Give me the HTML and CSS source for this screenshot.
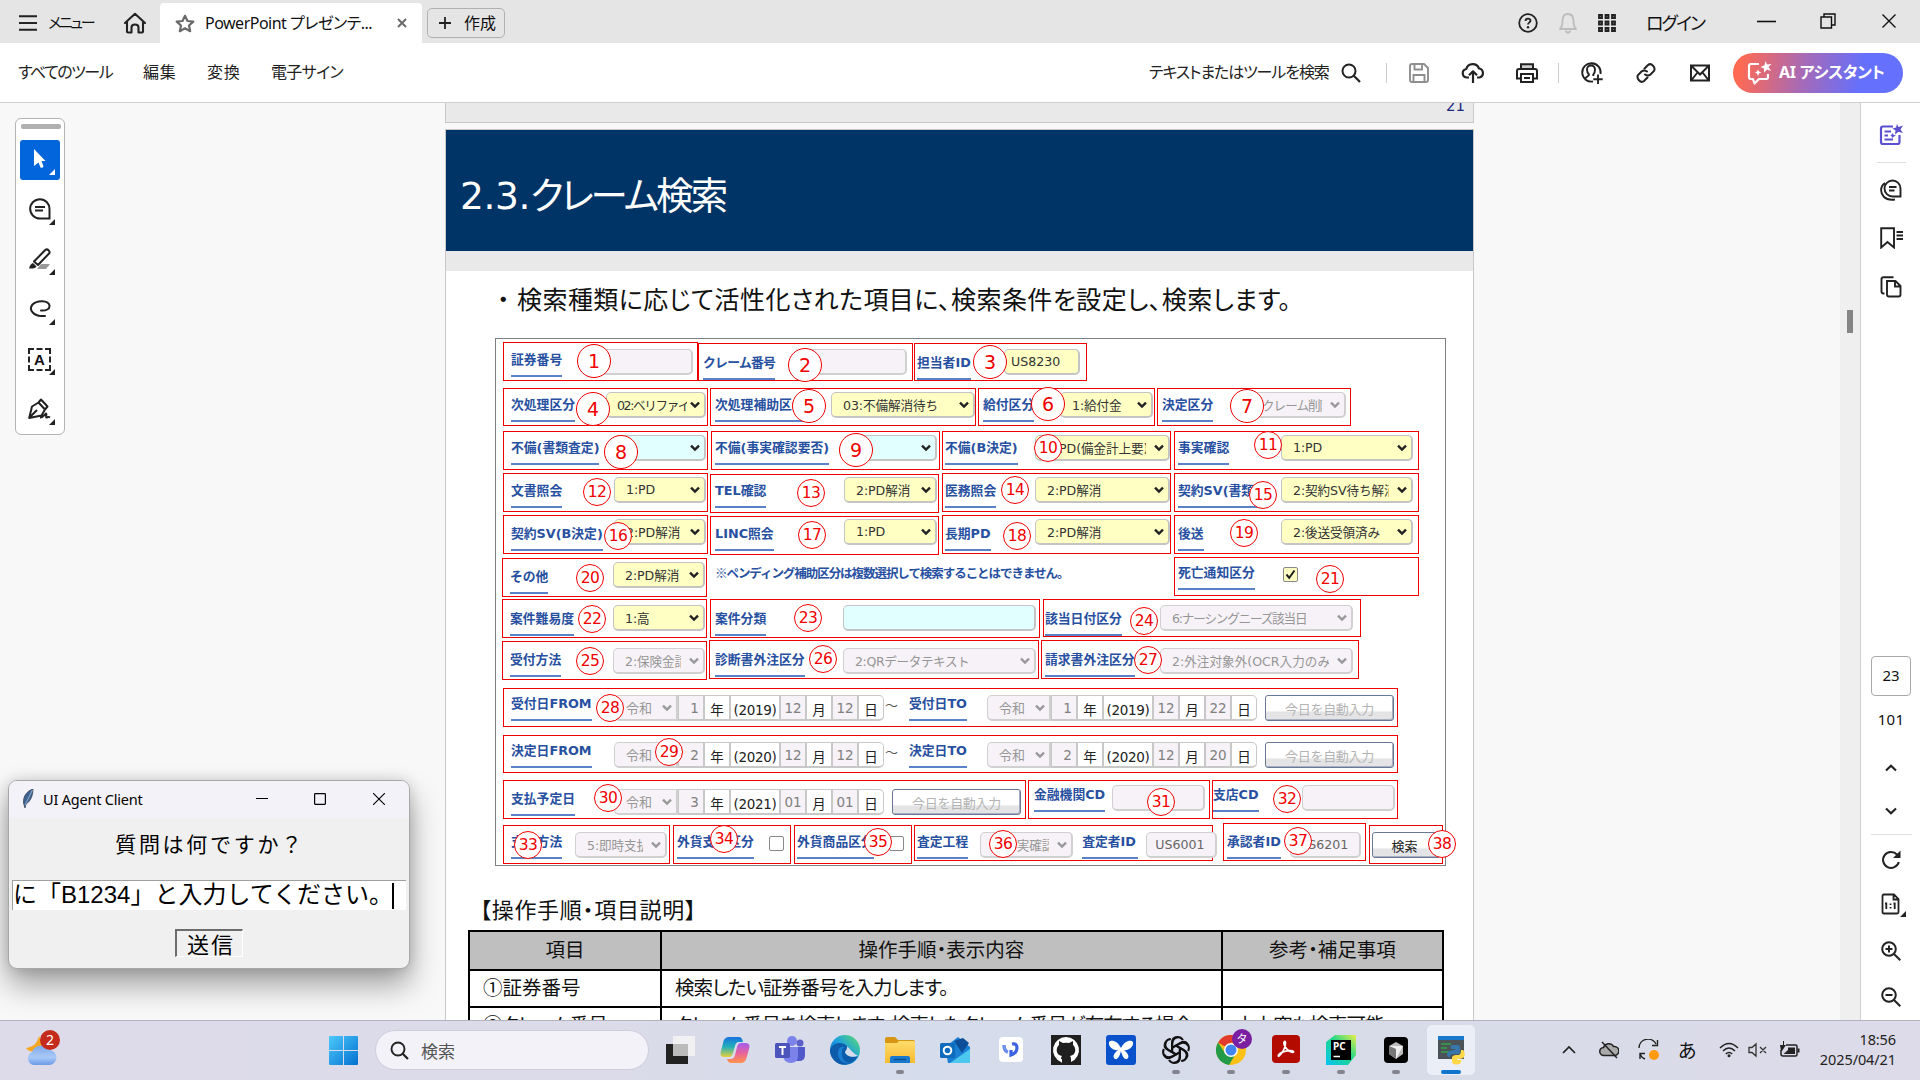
FILE: index.html
```html
<!DOCTYPE html>
<html lang="ja">
<head>
<meta charset="utf-8">
<title>PowerPoint プレゼンテーション</title>
<link rel="stylesheet" href="styles.css">
</head>
<body>
<svg class="defs" width="0" height="0" aria-hidden="true">
  <symbol id="chev" viewBox="0 0 12 8"><path d="M2 1.6 6 5.6 10 1.6" fill="none" stroke="currentColor" stroke-width="2.4"/></symbol>
  <symbol id="corner" viewBox="0 0 6 6"><path d="M6 0V6H0Z" fill="currentColor"/></symbol>
  <linearGradient id="gWin" x1="0" y1="0" x2="1" y2="1"><stop offset="0" stop-color="#4cc9fb"/><stop offset="1" stop-color="#0470d0"/></linearGradient>
  <linearGradient id="gEdge" x1="0" y1="1" x2="1" y2="0"><stop offset="0" stop-color="#0c59a4"/><stop offset=".5" stop-color="#1b9de2"/><stop offset="1" stop-color="#5fe06a"/></linearGradient>
  <linearGradient id="gCopA" x1="0" y1="0" x2="0" y2="1"><stop offset="0" stop-color="#1672e0"/><stop offset=".5" stop-color="#25b0b8"/><stop offset="1" stop-color="#e8cf3a"/></linearGradient>
  <linearGradient id="gCopB" x1="0" y1="0" x2="0" y2="1"><stop offset="0" stop-color="#a45cf0"/><stop offset=".5" stop-color="#e8629c"/><stop offset="1" stop-color="#ff9348"/></linearGradient>
  <linearGradient id="gFold" x1="0" y1="0" x2="0" y2="1"><stop offset="0" stop-color="#ffdc6b"/><stop offset="1" stop-color="#f6bb30"/></linearGradient>
  <linearGradient id="gPc" x1="0" y1="1" x2="1" y2="0"><stop offset="0" stop-color="#07c3f2"/><stop offset=".55" stop-color="#21d789"/><stop offset="1" stop-color="#e8ee4a"/></linearGradient>
  <linearGradient id="gCloud" x1="0" y1="0" x2="0" y2="1"><stop offset="0" stop-color="#7fa8ea"/><stop offset=".6" stop-color="#a9c9f7"/><stop offset="1" stop-color="#6d9be8"/></linearGradient>
</svg>

<header class="titlebar">
  <div class="menu"><svg width="18" height="16" viewBox="0 0 18 16"><path d="M0 1.2H18M0 8H18M0 14.8H18" stroke="#222" stroke-width="2"/></svg><span>メニュー</span></div>
  <svg class="home" width="24" height="22" viewBox="0 0 24 22"><path d="M2 11 12 1.8 22 11M4 10V19.5Q4 20.5 5 20.5H8.5V15.5Q8.5 12.5 12 12.5T15.500 15.5V20.500H19Q20 20.500 20 19.500V10" fill="none" stroke="#222" stroke-width="2.100" stroke-linejoin="round" stroke-linecap="round"/></svg>
  <div class="tab">
    <svg width="20" height="19" viewBox="0 0 20 19"><path d="M10 1.800 12.500 7 18.300 7.600 14 11.500 15.200 17.200 10 14.300 4.800 17.200 6 11.500 1.700 7.600 7.500 7Z" fill="none" stroke="#6a6a6a" stroke-width="2.200" stroke-linejoin="round"/></svg>
    <span>PowerPoint プレゼンテ...</span>
    <svg class="tabx" width="10" height="10" viewBox="0 0 10 10"><path d="M1 1 9 9M9 1 1 9" stroke="#6a6a6a" stroke-width="2"/></svg>
  </div>
  <div class="create"><svg width="12" height="12" viewBox="0 0 12 12"><path d="M6 0V12M0 6H12" stroke="#222" stroke-width="1.800"/></svg><span>作成</span></div>
  <div class="winctl">
    <svg width="20" height="20" viewBox="0 0 20 20"><circle cx="10" cy="10" r="8.800" fill="none" stroke="#222" stroke-width="1.800"/><path d="M7.500 8Q7.600 5.600 10 5.600T12.500 7.800C12.500 9.300 10 9.600 10 11.600" fill="none" stroke="#222" stroke-width="1.800"/><circle cx="10" cy="14.300" r="1.200" fill="#222"/></svg>
    <svg width="20" height="22" viewBox="0 0 20 22"><path d="M2 17C4 15 4.500 13.500 4.500 9 4.500 4 6.500 2 10 2S15.500 4 15.500 9C15.500 13.500 16 15 18 17ZM8 18.500Q8 20.500 10 20.500T12 18.500" fill="none" stroke="#bcbcbc" stroke-width="1.800" stroke-linejoin="round"/></svg>
    <svg width="18" height="18" viewBox="0 0 18 18"><g fill="#6b6b6b" stroke="#222" stroke-width="1.800"><path d="M1 1h3v3H1zM7.500 1h3v3h-3zM14 1h3v3h-3zM1 7.500h3v3H1zM7.500 7.500h3v3h-3zM14 7.500h3v3h-3zM1 14h3v3H1zM7.500 14h3v3h-3zM14 14h3v3h-3z"/></g></svg>
    <span class="login">ログイン</span>
    <svg class="w1" width="19" height="16" viewBox="0 0 19 16"><path d="M0 8.500H19" stroke="#111" stroke-width="1.600"/></svg>
    <svg class="w2" width="16" height="16" viewBox="0 0 16 16"><path d="M1 4H11.500V15H1ZM4 4V1H15V12H11.500" fill="none" stroke="#111" stroke-width="1.400"/></svg>
    <svg class="w3" width="14" height="14" viewBox="0 0 14 14"><path d="M.5 .5 13.500 13.500M13.500 .5 .5 13.500" stroke="#111" stroke-width="1.400"/></svg>
  </div>
</header>

<nav class="toolbar">
  <span class="t1">すべてのツール</span><span class="t2">編集</span><span class="t3">変換</span><span class="t4">電子サイン</span>
  <div class="actions">
    <span class="find">テキストまたはツールを検索</span>
    <svg width="20" height="20" viewBox="0 0 20 20"><circle cx="8" cy="8" r="6.500" fill="none" stroke="#222" stroke-width="2"/><path d="M12.800 12.800 19 19" stroke="#222" stroke-width="2.200"/></svg>
    <i class="vsep s1"></i>
    <svg class="a1" width="20" height="20" viewBox="0 0 20 20"><path d="M1 3Q1 1 3 1H15L19 5V17Q19 19 17 19H3Q1 19 1 17ZM5.500 1V6.500H13V1M4.500 19V12H15.500V19" fill="none" stroke="#8e8e8e" stroke-width="1.900"/></svg>
    <svg class="a2" width="24" height="22" viewBox="0 0 24 22"><path d="M8 15.500H5.500A4.300 4.300 0 0 1 5.300 7 6.700 6.700 0 0 1 18 6.500 4.600 4.600 0 0 1 18.500 15.500H16M12 21V9.500M8 13.300 12 9.300 16 13.300" fill="none" stroke="#222" stroke-width="2.200" stroke-linejoin="round"/></svg>
    <svg class="a3" width="22" height="20" viewBox="0 0 22 20"><path d="M5 6V1.200H17V6" fill="#cfcfcf" stroke="#222" stroke-width="2"/><path d="M5 15.500H1V8Q1 6 3 6H19Q21 6 21 8V15.500H17M5 11H17V19H5ZM8 15H14" fill="none" stroke="#222" stroke-width="2"/></svg>
    <i class="vsep s2"></i>
    <svg class="a4" width="22" height="22" viewBox="0 0 22 22"><path d="M12 19.500A9.200 9.200 0 1 1 19.500 12M4.500 16.500C5 14.500 8 14.500 8 12.500 6.500 11 6 9 6 7.500 6 5 7.500 3.500 10 3.500S14 5 14 7.500C14 9.500 13.500 11.500 12.300 12.500V14M17 12.500V22M12.300 17.200H21.700" fill="none" stroke="#222" stroke-width="1.900"/></svg>
    <svg class="a5" width="20" height="20" viewBox="0 0 20 20"><g fill="none" stroke="#222" stroke-width="2" stroke-linecap="round"><path d="M8.500 5.500 12 2Q14.500 0 17 2.700T18 8L14.500 11.500Q12 13.500 9 11.500"/><path d="M11.500 14.500 8 18Q5.500 20 3 17.300T2 12L5.500 8.500Q8 6.500 11 8.500"/></g></svg>
    <svg class="a6" width="20" height="18" viewBox="0 0 20 18"><path d="M1 1.500H19V16.500H1ZM1.500 2 10 10.500 18.500 2M1.500 16 7.500 8.500M18.500 16 12.500 8.500" fill="none" stroke="#222" stroke-width="2"/></svg>
    <div class="ai"><svg width="25" height="24" viewBox="0 0 25 24"><path d="M12 3H4Q2 3 2 5V16Q2 18 4 18H6L7.500 22.500 12 18H19Q21 18 21 16V13" fill="none" stroke="#fff" stroke-width="2.200" stroke-linejoin="round"/><path d="M18.500 0 20 3.500 24.500 3 21.500 6 24 10 20 8.500 17 11.500 17 7.500 13.500 6 17.500 4.200ZM11 8.500 12 10.500 14.300 11.500 12 12.600 11 15 10 12.600 8 11.500 10 10.500Z" fill="#fff"/></svg><span>AI アシスタント</span></div>
  </div>
</nav>

<main class="work">
  <section class="viewer">
    <div class="prevpage"><span>21</span></div>
    <article class="page">
      <h1><span>2.3.</span>クレーム検索</h1>
      <div class="band"></div>
      <p class="lead"><span class="dot">・</span>検索種類に応じて活性化された項目に、検索条件を設定し、検索します。</p>

      <div class="form">
        <div class="row r1">
          <div class="box f1"><label>証券番号</label><b class="in off"></b></div>
          <div class="box f2"><label class="sp">クレーム番号</label><b class="in off"></b></div>
          <div class="box f3"><label>担当者ID</label><b class="in yel">US8230</b></div>
        </div>
        <div class="row r2">
          <div class="box f4"><label>次処理区分</label><b class="in yel sel"><span>02:ベリファイ</span><svg><use href="#chev"/></svg></b></div>
          <div class="box f5"><label>次処理補助区分</label><b class="in yel sel"><span>03:不備解消待ち</span><svg><use href="#chev"/></svg></b></div>
          <div class="box f6"><label>給付区分</label><b class="in yel sel"><span>1:給付金</span><svg><use href="#chev"/></svg></b></div>
          <div class="box f7"><label>決定区分</label><b class="in off sel"><span>クレーム削除</span><svg><use href="#chev"/></svg></b></div>
        </div>
        <div class="row r3">
          <div class="box c1"><label>不備(書類査定)</label><b class="in cya sel"><span></span><svg><use href="#chev"/></svg></b></div>
          <div class="box c2"><label>不備(事実確認要否)</label><b class="in cya sel"><span></span><svg><use href="#chev"/></svg></b></div>
          <div class="box c3"><label>不備(B決定)</label><b class="in yel sel"><span>1:PD(備金計上要)</span><svg><use href="#chev"/></svg></b></div>
          <div class="box c4"><label>事実確認</label><b class="in yel sel"><span>1:PD</span><svg><use href="#chev"/></svg></b></div>
        </div>
        <div class="row r4">
          <div class="box c1"><label>文書照会</label><b class="in yel sel"><span>1:PD</span><svg><use href="#chev"/></svg></b></div>
          <div class="box c2 low"><label>TEL確認</label><b class="in yel sel"><span>2:PD解消</span><svg><use href="#chev"/></svg></b></div>
          <div class="box c3"><label>医務照会</label><b class="in yel sel"><span>2:PD解消</span><svg><use href="#chev"/></svg></b></div>
          <div class="box c4"><label>契約SV(書類)</label><b class="in yel sel"><span>2:契約SV待ち解消</span><svg><use href="#chev"/></svg></b></div>
        </div>
        <div class="row r5">
          <div class="box c1"><label>契約SV(B決定)</label><b class="in yel sel"><span>2:PD解消</span><svg><use href="#chev"/></svg></b></div>
          <div class="box c2 low"><label>LINC照会</label><b class="in yel sel"><span>1:PD</span><svg><use href="#chev"/></svg></b></div>
          <div class="box c3"><label>長期PD</label><b class="in yel sel"><span>2:PD解消</span><svg><use href="#chev"/></svg></b></div>
          <div class="box c4"><label>後送</label><b class="in yel sel"><span>2:後送受領済み</span><svg><use href="#chev"/></svg></b></div>
        </div>
        <div class="row r6">
          <div class="box c1 out"><label>その他</label><b class="in yel sel"><span>2:PD解消</span><svg><use href="#chev"/></svg></b></div>
          <p class="note">※ペンディング補助区分は複数選択して検索することはできません。</p>
          <div class="box f21"><label>死亡通知区分</label><b class="chk on"><svg width="11" height="11" viewBox="0 0 11 11"><path d="M1.500 5.500 4.200 8.800 9.500 1.500" fill="none" stroke="#222" stroke-width="2"/></svg></b></div>
        </div>
        <div class="row r7">
          <div class="box c1 out"><label>案件難易度</label><b class="in yel sel"><span>1:高</span><svg><use href="#chev"/></svg></b></div>
          <div class="box f23"><label>案件分類</label><b class="in cya"></b></div>
          <div class="box f24"><label>該当日付区分</label><b class="in off sel"><span>6:ナーシングニーズ該当日</span><svg><use href="#chev"/></svg></b></div>
        </div>
        <div class="row r8">
          <div class="box c1 out low"><label>受付方法</label><b class="in off sel"><span>2:保険金請求</span><svg><use href="#chev"/></svg></b></div>
          <div class="box f26"><label>診断書外注区分</label><b class="in off sel"><span>2:QRデータテキスト</span><svg><use href="#chev"/></svg></b></div>
          <div class="box f27"><label>請求書外注区分</label><b class="in off sel"><span>2:外注対象外(OCR入力のみ)</span><svg><use href="#chev"/></svg></b></div>
        </div>
        <div class="row r9">
          <div class="box wide">
            <label>受付日FROM</label>
            <div class="date"><b class="in off sel era"><span>令和</span><svg><use href="#chev"/></svg></b><i class="g one">1</i><i>年</i><i class="y">(2019)</i><i class="g">12</i><i>月</i><i class="g">12</i><i class="end">日</i></div>
            <span class="til">～</span>
            <label>受付日TO</label>
            <div class="date"><b class="in off sel era"><span>令和</span><svg><use href="#chev"/></svg></b><i class="g one">1</i><i>年</i><i class="y">(2019)</i><i class="g">12</i><i>月</i><i class="g">22</i><i class="end">日</i></div>
            <b class="btn auto">今日を自動入力</b>
          </div>
        </div>
        <div class="row r10">
          <div class="box wide">
            <label>決定日FROM</label>
            <div class="date"><b class="in off sel era"><span>令和</span><svg><use href="#chev"/></svg></b><i class="g one">2</i><i>年</i><i class="y">(2020)</i><i class="g">12</i><i>月</i><i class="g">12</i><i class="end">日</i></div>
            <span class="til">～</span>
            <label>決定日TO</label>
            <div class="date"><b class="in off sel era"><span>令和</span><svg><use href="#chev"/></svg></b><i class="g one">2</i><i>年</i><i class="y">(2020)</i><i class="g">12</i><i>月</i><i class="g">20</i><i class="end">日</i></div>
            <b class="btn auto">今日を自動入力</b>
          </div>
        </div>
        <div class="row r11">
          <div class="box f30">
            <label>支払予定日</label>
            <div class="date"><b class="in off sel era"><span>令和</span><svg><use href="#chev"/></svg></b><i class="g one">3</i><i>年</i><i class="y">(2021)</i><i class="g">01</i><i>月</i><i class="g">01</i><i class="end">日</i></div>
            <b class="btn auto">今日を自動入力</b>
          </div>
          <div class="box f31"><label>金融機関CD</label><b class="in off"></b></div>
          <div class="box f32"><label>支店CD</label><b class="in off"></b></div>
        </div>
        <div class="row r12">
          <div class="box f33"><label>支払方法</label><b class="in off sel"><span>5:即時支払</span><svg><use href="#chev"/></svg></b></div>
          <div class="box f34"><label>外貨支払区分</label><b class="chk"></b></div>
          <div class="box f35"><label>外貨商品区分</label><b class="chk"></b></div>
          <div class="box f36"><label>査定工程</label><b class="in off sel"><span>2:事実確認</span><svg><use href="#chev"/></svg></b><label class="who">査定者ID</label><b class="in off code">US6001</b></div>
          <div class="box f37"><label>承認者ID</label><b class="in off code">US6201</b></div>
          <div class="box f38"><b class="btn go">検索</b></div>
        </div>

        <em class="n big n1">1</em><em class="n big n2">2</em><em class="n big n3">3</em><em class="n big n4">4</em><em class="n big n5">5</em><em class="n big n6">6</em><em class="n n7 big">7</em><em class="n big n8">8</em><em class="n big n9">9</em>
        <em class="n n10">10</em><em class="n n11">11</em><em class="n n12">12</em><em class="n n13">13</em><em class="n n14">14</em><em class="n n15">15</em><em class="n n16">16</em><em class="n n17">17</em><em class="n n18">18</em><em class="n n19">19</em>
        <em class="n n20">20</em><em class="n n21">21</em><em class="n n22">22</em><em class="n n23">23</em><em class="n n24">24</em><em class="n n25">25</em><em class="n n26">26</em><em class="n n27">27</em><em class="n n28">28</em><em class="n n29">29</em>
        <em class="n n30">30</em><em class="n n31">31</em><em class="n n32">32</em><em class="n n33">33</em><em class="n n34">34</em><em class="n n35">35</em><em class="n n36">36</em><em class="n n37">37</em><em class="n n38">38</em>
      </div>

      <h2>【操作手順・項目説明】</h2>
      <table>
        <tr><th class="k1">項目</th><th class="k2">操作手順・表示内容</th><th class="k3">参考・補足事項</th></tr>
        <tr><td>①証券番号</td><td class="long">検索したい証券番号を入力します。</td><td></td></tr>
        <tr><td class="long">②クレーム番号</td><td class="long">クレーム番号を検索します。検索したクレーム番号が存在する場合</td><td class="long">上上空も検索可能</td></tr>
      </table>
    </article>

    <aside class="palette">
      <i class="grip"></i>
      <div class="tool on"><svg width="14" height="20" viewBox="0 0 14 20"><path d="M1 0 12.500 12H8.500L10.500 17.500Q9.500 19.500 7.500 18.500L5.500 13.500 1 17Z" fill="#fff"/></svg><svg class="cr"><use href="#corner"/></svg></div>
      <div class="tool"><svg width="22" height="22" viewBox="0 0 22 22"><path d="M11 1.200A9.800 9.600 0 0 0 11 20.500H20.500V11A9.500 9.800 0 0 0 11 1.200ZM6 9H16M6 12.500H14" fill="none" stroke="#222" stroke-width="2"/></svg><svg class="cr"><use href="#corner"/></svg></div>
      <div class="tool"><svg width="22" height="22" viewBox="0 0 22 22"><path d="M12 16H21L17 21H8Z" fill="#999"/><path d="M5 13.500 16.500 1.800Q18 .8 19.500 2.200T20.500 5L9 17Z" fill="#fff" stroke="#222" stroke-width="2" stroke-linejoin="round"/><path d="M4 15 7.500 18.500Q6 21 0 20.500 1 16 4 15Z" fill="#222"/></svg><svg class="cr"><use href="#corner"/></svg></div>
      <div class="tool"><svg width="22" height="18" viewBox="0 0 22 18"><path d="M12 10.500C17 11 21 9 20.500 5.500 19.500 0 8 0 3.500 4.500-1 10 5 17 16 16" fill="none" stroke="#222" stroke-width="2" stroke-linecap="round"/></svg><svg class="cr"><use href="#corner"/></svg></div>
      <div class="tool"><span class="abox">A</span><svg class="cr"><use href="#corner"/></svg></div>
      <div class="tool"><svg width="23" height="22" viewBox="0 0 23 22"><path d="M1.200 20 4 8.500 10.500 4.500 17 11.500 13.500 17.500 1.200 20ZM1.500 19.500 9 12M10.500 4.500 13 1.500 19.500 8.500 17 11.500M12 19.500C15 20 16 17 18 15.500 19 15.500 17.500 19.500 18.500 19.500S20.500 18.500 22 19.500" fill="none" stroke="#222" stroke-width="2" stroke-linejoin="round"/></svg><svg class="cr"><use href="#corner"/></svg></div>
    </aside>
  </section>
  <div class="track"><i></i></div>
  <aside class="side">
    <svg class="q1" width="24" height="24" viewBox="0 0 24 24"><path d="M14 3.500H4Q2 3.500 2 5.500V19Q2 21 4 21H18.500Q20.500 21 20.500 19V12M5.500 8.500H12M5.500 12.500H9M5.500 16.500H14" fill="none" stroke="#5b50d0" stroke-width="2.200"/><path d="M18 1 19.500 4 24 2.500 21.500 6.500 24 10 19.500 8.800 16 11.500 16.500 7.500 13.500 5.500 17 4.500ZM13 10 15 12 17 12.500 15 13.500 13 15 12.500 13 11 12.500 12.500 12Z" fill="#5b50d0"/></svg>
    <i class="hsep"></i>
    <svg class="q2" width="22" height="22" viewBox="0 0 22 22"><path d="M12.500 1.500A7.800 7.800 0 0 0 12.500 17.500H20.500V9.500A8 8 0 0 0 12.500 1.500ZM9 8H16.500M9 11.500H14.500M5 4C0 7.500 0 14 4 18 7 21 11 21 15 20.500" fill="none" stroke="#222" stroke-width="1.900"/></svg>
    <svg class="q3" width="23" height="22" viewBox="0 0 23 22"><path d="M1.200 1.200H14V20.500L7.500 15 1.200 20.500ZM16.500 5H23M16.500 8.500H23M16.500 12H23" fill="none" stroke="#222" stroke-width="1.900"/></svg>
    <svg class="q4" width="22" height="22" viewBox="0 0 22 22"><path d="M7 5H15.500L20.500 10V18.500Q20.500 20.500 18.500 20.500H9Q7 20.500 7 18.500ZM15 5.500V10.500H20M4.500 17.500H3.500Q1.500 17.500 1.500 15.500V3Q1.500 1.200 3.500 1.200H13.500" fill="none" stroke="#222" stroke-width="1.900"/></svg>
    <div class="pageno">23</div>
    <div class="total">101</div>
    <svg class="q5" width="12" height="8" viewBox="0 0 12 8"><path d="M1 6.500 6 1.800 11 6.500" fill="none" stroke="#222" stroke-width="2.200"/></svg>
    <svg class="q6" width="12" height="8" viewBox="0 0 12 8"><path d="M1 1.500 6 6.200 11 1.500" fill="none" stroke="#222" stroke-width="2.200"/></svg>
    <i class="hsep lg"></i>
    <svg class="q7" width="20" height="20" viewBox="0 0 20 20"><path d="M16 4.500A8 8 0 1 0 17.800 12" fill="none" stroke="#222" stroke-width="2"/><path d="M19.500 .5V8H12Z" fill="#222"/></svg>
    <svg class="q8" width="25" height="24" viewBox="0 0 25 24"><path d="M1.500 3Q1.500 1.500 3 1.500H13L17.500 6V19Q17.500 20.500 16 20.500H3Q1.500 20.500 1.500 19ZM12.500 1.500V6.500H17.500M5.300 9.500V16M13.700 9.500V16M4 10.500H5.500M12.500 10.500H14M9.500 10.500V12M9.500 14V15.500" fill="none" stroke="#222" stroke-width="1.800"/><path d="M25 18V24H19Z" fill="#222"/></svg>
    <svg class="q9" width="20" height="20" viewBox="0 0 20 20"><path d="M12.500 12.500 19.300 19.300M4.500 8H11.500M8 4.500V11.500" stroke="#222" stroke-width="2"/><circle cx="8" cy="8" r="6.800" fill="none" stroke="#222" stroke-width="2"/></svg>
    <svg class="q10" width="20" height="20" viewBox="0 0 20 20"><path d="M12.500 12.500 19.300 19.300M4.500 8H11.500" stroke="#222" stroke-width="2"/><circle cx="8" cy="8" r="6.800" fill="none" stroke="#222" stroke-width="2"/></svg>
  </aside>
</main>

<section class="tk">
  <header>
    <svg width="12" height="20" viewBox="0 0 12 20"><path d="M11 0C5 2 1 7 1.500 14L3 19 4 15C9 12 11 6 11 0Z" fill="#3d628f" stroke="#2b3a52" stroke-width=".7"/><path d="M10.500 1 3 16" stroke="#a9c4de" stroke-width=".8"/></svg>
    <span>UI Agent Client</span>
    <svg class="m" width="12" height="12" viewBox="0 0 12 12"><path d="M0 5.500H12" stroke="#000"/></svg>
    <svg class="m2" width="12" height="12" viewBox="0 0 12 12"><rect x=".6" y=".6" width="10.800" height="10.800" rx=".8" fill="none" stroke="#000" stroke-width="1.200"/></svg>
    <svg class="m3" width="12" height="12" viewBox="0 0 12 12"><path d="M0 0 12 12M12 0 0 12" stroke="#000" stroke-width="1.100"/></svg>
  </header>
  <p>質問は何ですか？</p>
  <div class="entry"><span>に「B1234」と入力してください。</span><i></i></div>
  <div class="send">送信</div>
</section>

<footer class="taskbar">
  <div class="weather"><svg width="34" height="36" viewBox="0 0 34 36"><path d="M13 6C11 14 7 17 0 18 4 24 14 22 17 14Z" fill="#f5a623"/><path d="M7 35A7 7 0 0 1 6 22 9.500 9.500 0 0 1 23 20 7.500 7.500 0 0 1 23 35Z" fill="url(#gCloud)"/></svg><span>2</span></div>
  <svg class="start" width="29" height="29" viewBox="0 0 29 29"><g fill="url(#gWin)"><path d="M0 1Q0 0 1 0H14V14H0ZM15 0H28Q29 0 29 1V14H15ZM0 15H14V29H1Q0 29 0 28ZM15 15H29V28Q29 29 28 29H15Z"/></g></svg>
  <div class="search"><svg width="19" height="19" viewBox="0 0 19 19"><circle cx="8" cy="8" r="6.500" fill="none" stroke="#222" stroke-width="1.900"/><path d="M12.700 12.700 18 18" stroke="#222" stroke-width="2.200"/></svg><span>検索</span></div>
  <div class="apps">
    <div><svg viewBox="0 0 30 30"><path d="M1 9H23V29H1Z" fill="#222"/><path d="M8 1H30V21H8Z" fill="#f4f4f4" opacity=".85"/><path d="M8 9H23V21H8Z" fill="#bbb"/></svg></div>
    <div><svg viewBox="0 0 30 30"><path d="M21 8H25Q31 8 29 14L26.500 23Q25 28 21 28H11Q8 28 7 24H11Q14 24 15 20L17 12Q18 8 21 8Z" fill="url(#gCopB)"/><path d="M9 22H5Q-1 22 1 16L3.500 6Q5 2 9 2H19Q22 2 23 7H19Q16 7 15 11L13 18Q12 22 9 22Z" fill="url(#gCopA)"/></svg></div>
    <div><svg viewBox="0 0 30 30"><circle cx="25" cy="8" r="3.500" fill="#5b5fc7"/><circle cx="17" cy="6" r="5" fill="#7b83eb"/><path d="M20 12H30V20Q30 26 24 26H20Z" fill="#5059c9"/><path d="M8 12H23V21Q23 28 16 28T8 21Z" fill="#7b83eb"/><rect y="8" width="15" height="15" rx="1.500" fill="#4b53bc"/><path d="M4 12H11M7.500 12V20" stroke="#fff" stroke-width="2"/></svg></div>
    <div><svg viewBox="0 0 30 30"><circle cx="15" cy="15" r="15" fill="url(#gEdge)"/><path d="M0 15C3 7 12 6 17 11 18 13 16 15 15 17 16 21 22 23 28 21 24 29 12 33 5 26 1 22 0 18 0 15Z" fill="#0d5cab"/><path d="M15 17C16 15 18 13 17 11 20 14 24 19 28 21 22 23 16 21 15 17Z" fill="#d7dbea"/><path d="M8 17C7 24 13 30 21 28 14 28 11 23 12 17Q12 13 15 12 9 11 8 17Z" fill="#1a7fd0"/></svg></div>
    <div class="run"><svg viewBox="0 0 30 30"><path d="M0 4Q0 2 2 2H10L13 5H28Q30 5 30 7V12H0Z" fill="#d89614"/><path d="M0 8H12L14 6H28Q30 6 30 8V28H0Z" fill="url(#gFold)"/><path d="M5 28V23Q5 21 7 21H23Q25 21 25 23V28Z" fill="#1979cc"/><path d="M9 24.500H21" stroke="#0b508f" stroke-width="1.500"/></svg></div>
    <div><svg viewBox="0 0 30 30"><path d="M5 12 18 2 30 12V28H8Z" fill="#1b7fd4"/><path d="M14 6 23 3 29 8 22 18Z" fill="#0c4f98"/><path d="M10 28 30 14V28Z" fill="#4cc8f0"/><rect y="8" width="15" height="15" rx="1.500" fill="#0f6cbd"/><circle cx="7.500" cy="15.500" r="3.800" fill="none" stroke="#fff" stroke-width="2"/></svg></div>
    <div><svg viewBox="0 0 30 30"><rect x="3" y="2" width="24" height="25" rx="4" fill="#fff"/><path d="M16 9Q21 8 21 13T15 20V15" fill="none" stroke="#3b62e0" stroke-width="3.200"/><path d="M8 10Q8 16 12 17" fill="none" stroke="#6d8ff0" stroke-width="3.500"/></svg></div>
    <div><svg viewBox="0 0 30 30"><rect width="30" height="30" fill="#1f1f1f"/><path d="M11 28V24C7 24.500 6 22.500 5 21M15 2A13 13 0 0 0 10 27V24Q10 22 11 21C4 20 5 12 8 10V6L12 8Q15 7.300 18 8L22 6V10C25 12 26 20 19 21Q20 22 20 24V27A13 13 0 0 0 15 2Z" fill="#fff"/></svg></div>
    <div><svg viewBox="0 0 30 30"><rect width="30" height="30" rx="3" fill="#0a52cc"/><path d="M15 13C12 6 5 4 3 7 2 12 8 16 12 15 8 18 6 22 9 24 12 25 14 20 15 16 16 20 18 25 21 24 24 22 22 18 18 15 22 16 28 12 27 7 25 4 18 6 15 13Z" fill="#fff"/></svg></div>
    <div class="run"><svg viewBox="0 0 30 30"><g fill="none" stroke="#111" stroke-width="2"><path id="kn" d="M11 18V8Q11 2 16.500 2 20 2 22 5M11 13 19 8.500Q24 6 27 10.500"/><use href="#kn" transform="rotate(60 15 15)"/><use href="#kn" transform="rotate(120 15 15)"/><use href="#kn" transform="rotate(180 15 15)"/><use href="#kn" transform="rotate(240 15 15)"/><use href="#kn" transform="rotate(300 15 15)"/></g></svg></div>
    <div class="run"><svg viewBox="0 0 30 30"><circle cx="15" cy="15" r="15" fill="#fbc116"/><path d="M15 15 2 7.500A15 15 0 0 1 28 7.500H15Z" fill="#e33b2e"/><path d="M2 7.500A15 15 0 0 0 13 30L19 20 9 18Z" fill="#229a48"/><circle cx="15" cy="15" r="7" fill="#fff"/><circle cx="15" cy="15" r="5.500" fill="#4285f4"/></svg><span class="who">タ</span></div>
    <div class="run"><svg viewBox="0 0 30 30"><rect x="1" y="0" width="28" height="28" rx="4" fill="#b30b00"/><path d="M8 21C11 19 15 12 14.500 7.500 14 5.500 12.500 6.500 13 9 14 13 18 17 21.500 17.500 24 17 22 15.500 19 15.700 14 16 9 18 7.500 20 7 21.500 7.500 21.500 8 21Z" fill="none" stroke="#fff" stroke-width="1.700"/></svg></div>
    <div class="run"><svg viewBox="0 0 30 30"><path d="M9 0H30V20L22 30H0V7Z" fill="url(#gPc)"/><rect x="5" y="5" width="20" height="20" fill="#000"/><text x="7" y="15" font-size="10" font-weight="700" fill="#fff">PC</text><path d="M7.500 21.500H14" stroke="#fff" stroke-width="1.500"/></svg></div>
    <div class="run"><svg viewBox="0 0 30 30"><rect x="3" y="2" width="24" height="26" rx="4" fill="#000"/><path d="M15 7 22 11V19L15 24 8 19V11Z" fill="#bbb"/><path d="M8 11H22L15 24V14Z" fill="#eee"/><path d="M8 11 15 14V24L8 19Z" fill="#777"/></svg></div>
    <div class="run act"><svg viewBox="0 0 30 30"><path d="M2 1H28V24H2Z" fill="#4b5358"/><path d="M2 1H28V5H2Z" fill="#1979cc"/><path d="M5 9H15M5 13H11M5 17H13" stroke="#35a545" stroke-width="1.300"/><path d="M16 10H22Q24 10 24 13V17Q24 19 21 19H17Q14 19 14 22H12Q10 20 12 17 13 15 19 15V14H15Q14 10 16 10Z" fill="#3776ab"/><path d="M25 15H27Q30 18 28 22 27 24 21 24V25H25Q26 29 21 29.500 16 30 16 26V22Q17 20 20 20H23Q25 19 25 15Z" fill="#ffd94a"/></svg></div>
  </div>
  <div class="tray">
    <svg class="y1" width="14" height="9" viewBox="0 0 14 9"><path d="M1 8 7 2 13 8" fill="none" stroke="#222" stroke-width="1.700"/></svg>
    <svg class="y2" width="20" height="18" viewBox="0 0 20 18"><path d="M5 14.500A4 4 0 0 1 4.500 6.500 5.500 5.500 0 0 1 14.500 5.500 4.500 4.500 0 0 1 16 14.500Z" fill="#aaa" stroke="#222" stroke-width="1.500"/><path d="M3 1 18 17" stroke="#222" stroke-width="1.500"/></svg>
    <svg class="y3" width="22" height="22" viewBox="0 0 22 22"><path d="M1 9A9 9 0 0 1 18 5M19.500 1V6.500H14M7 20A9 9 0 0 1 2 15M2 20V14.500H7" fill="none" stroke="#222" stroke-width="1.400"/><circle cx="16" cy="16" r="5" fill="#ff9a0a"/></svg>
    <span class="ime">あ</span>
    <svg class="y4" width="20" height="16" viewBox="0 0 20 16"><path d="M1 6Q10-3 19 6M4 9Q10 3 16 9M6.800 12Q10 9 13.200 12" fill="none" stroke="#222" stroke-width="1.500"/><circle cx="10" cy="13.700" r="1.500" fill="#222"/></svg>
    <svg class="y5" width="19" height="16" viewBox="0 0 19 16"><path d="M1 5.500H4L8 2V14L4 10.500H1ZM12 5 18 11M18 5 12 11" fill="none" stroke="#333" stroke-width="1.300"/></svg>
    <svg class="y6" width="21" height="17" viewBox="0 0 21 17"><path d="M7 4H16.500Q18 4 18 5.500V13.500Q18 15 16.500 15H4Q2 15 2 13V9" fill="none" stroke="#222" stroke-width="1.500"/><path d="M9 6.500H16V13H4.500L9 9ZM18.500 7.500H20.500V11.500H18.500ZM4 0V4H1L2 10H3L7 4H5V0Z" fill="#222"/></svg>
    <div class="clock"><span>18:56</span><span>2025/04/21</span></div>
  </div>
</footer>
</body>
</html>
```
FILE: styles.css
```css
* { box-sizing: border-box; }
body {
  margin: 0; width: 1920px; height: 1080px; overflow: hidden; position: relative;
  display: flex; flex-direction: column; background: #fff; color: #111;
  font-family: "Noto Sans", "Noto Sans CJK JP", sans-serif; font-size: 16px;
  font-feature-settings: "palt";
}
svg { flex: none; display: block; }
.defs { position: absolute; }
b, i, em { font-style: normal; font-weight: 400; }
span { white-space: nowrap; }

/* title bar */
.titlebar { height: 43px; flex: none; background: #e5e5e5; display: flex; align-items: center; padding-top: 3px; }
.titlebar span, .toolbar span { padding-bottom: 3px; }
.menu { display: flex; align-items: center; gap: 11px; margin-left: 19px; width: 104px; font-size: 15px; letter-spacing: -2.300px; }
.tab { height: 40px; width: 262px; margin-left: 13px; padding-left: 15px; display: flex; align-items: center; background: #fff; border-radius: 4px 4px 0 0; letter-spacing: -.5px; }
.tab span { margin-left: 10px; width: 171px; }
.tabx { margin-left: 21px; }
.create { margin-left: 5px; width: 78px; height: 30px; border: 1px solid #b0b0b0; border-radius: 5px; display: flex; align-items: center; padding-left: 11px; gap: 13px; }
.winctl { margin-left: auto; display: flex; align-items: center; gap: 20px; padding-right: 24px; }
.login { font-size: 18px; width: 58px; margin-left: 10px; letter-spacing: -1.900px; }
.w1 { margin: -4px 0 0 33px; } .w2 { margin: -5px 0 0 24px; } .w3 { margin: -5px 0 0 26px; }

/* tool bar */
.toolbar { height: 60px; flex: none; border-bottom: 1px solid #d0d0d0; display: flex; align-items: center; padding-left: 18px; color: #222; }
.t1 { width: 125px; letter-spacing: -1.500px; } .t2, .t3 { width: 64px; } .t2, .t3 { letter-spacing: .8px; } .t4 { letter-spacing: -.7px; }
.actions { margin-left: auto; display: flex; align-items: center; padding-right: 17px; }
.find { width: 192px; letter-spacing: -1.100px; }
.vsep { width: 1px; height: 20px; background: #ccc; }
.s1 { margin-left: 25px; } .a1 { margin-left: 22px; } .a2 { margin-left: 32px; } .a3 { margin-left: 31px; }
.s2 { margin-left: 20px; } .a4 { margin-left: 22px; } .a5 { margin-left: 33px; } .a6 { margin-left: 34px; }
.ai { margin-left: 23px; width: 170px; height: 40px; border-radius: 20px; display: flex; align-items: center; padding-left: 14px; gap: 7px; color: #fff; font-weight: 700; letter-spacing: -.3px; background: linear-gradient(100deg, #ff6a52 5%, #a56ab8 42%, #6570fc 75%); }

/* viewer */
.work { flex: 1; min-height: 0; display: flex; }
.viewer { width: 1840px; background: #f8f8f8; position: relative; overflow: hidden; }
.prevpage { margin-left: 445px; width: 1029px; height: 20px; background: #e9e9e9; border: solid #c8c8c8; border-width: 0 1px 1px; color: #1c2a80; font: 15px "DejaVu Sans"; display: flex; justify-content: flex-end; padding-right: 8px; }
.prevpage span { margin-top: -6px; }
.page { margin: 6px 0 0 445px; width: 1029px; height: 920px; background: #fff; border: 1px solid #c8c8c8; }
.page h1 { margin: 0; height: 121px; background: #003366; color: #fff; font-weight: 400; font-size: 37.500px; line-height: 129px; padding-left: 14px; letter-spacing: -2.900px; white-space: nowrap; }
.page h1 span { font-family: "DejaVu Sans"; letter-spacing: -.4px; }
.band { height: 20px; background: #e9e9e9; }
.lead { margin: 8px 0 19px 71px; font-size: 25px; line-height: 40px; white-space: nowrap; letter-spacing: .45px; display: flex; }
.dot { width: 0; position: relative; left: -20px; }
.page h2 { margin: 28px 0 6px 34px; font-size: 22px; font-weight: 400; line-height: 30px; letter-spacing: .7px; white-space: nowrap; }
table { margin-left: 22px; width: 976px; border-collapse: collapse; table-layout: fixed; font-size: 19.500px; line-height: 32px; white-space: nowrap; }
th, td { border: 2px solid #000; padding: 1px 13px 2px; height: 37px; font-weight: 400; overflow: hidden; }
th { background: #bfbfbf; height: 39px; }
.k1 { width: 192px; } .k2 { width: 561px; }
.long { letter-spacing: -.9px; }

/* search form */
.form { margin-left: 49px; width: 951px; height: 528px; border: 1px solid #808080; padding: 3px 0 0 7px; position: relative; display: grid; grid-template-rows: 46px 43px 42px 42px 42px 42px 41px 48px 47px 45px 43px 41px; font: 13px "DejaVu Sans", "Noto Sans CJK JP", sans-serif; color: #333; }
.row { display: flex; align-items: flex-start; --lt: 6px; --ct: 3px; }
.box { height: 39px; border: 1px solid #f00000; display: flex; align-items: flex-start; flex: none; min-width: 0; padding-left: 7px; }
label { flex: none; margin-top: var(--lt); padding-bottom: 5px; border-bottom: 2px solid #5a82c8; color: #2850a0; font: 600 12.800px/20px "DejaVu Sans", "Noto Sans CJK JP", sans-serif; white-space: nowrap; }
.in { height: 26px; border: 1px solid #c4c4c4; border-width: 1px 2px 2px 1px; border-radius: 5px; display: flex; align-items: center; margin-top: var(--ct); flex: none; font-size: 12.600px; white-space: nowrap; }
.box > .in, .box > .chk { margin-left: auto; }
.box > label { margin-right: -200px; }
.yel { background: #ffffc4; } .cya { background: #e2ffff; } .off { background: #f6f2f7; color: #969696; border-color: #d0d0d0; }
.sel { padding: 0 3px 0 11px; justify-content: space-between; }
.sel span { overflow: hidden; min-width: 0; letter-spacing: -.1px; }
.sel svg { width: 12px; height: 8px; margin-left: 7px; color: #222; }
.off svg { color: #999; }
.out { margin-left: -1px; }
.chk { width: 15px; height: 15px; border: 1px solid #888; border-radius: 2px; background: #fff; }
.chk.on { background: #ffffc4; display: flex; padding: 1px; }

.r1 { --lt: 7px; --ct: 6px; }
.f1 { width: 195px; } .f1 .in { width: 110px; margin-right: 4px; }
.f2 { width: 215px; height: 38px; margin: 1px 0 0 0; padding-left: 4px; --lt: 9px; --ct: 5px; } .f2 .in { width: 110px; margin-right: 5px; }
.f3 { width: 173px; height: 38px; margin: 1px 0 0 1px; padding-left: 2px; --lt: 9px; --ct: 5px; } .f3 .in { width: 76px; margin-right: 6px; padding-left: 6px; }
label.sp { letter-spacing: -.7px; }
.r2 .box { height: 38px; }
.f4 { width: 205px; } .f4 .in { width: 100px; margin-right: 1px; } .f4 .sel { padding-left: 10px; } .f4 span { letter-spacing: -1.400px; }
.f4 .sel svg { margin-left: 2px; }
.f5 { width: 266px; margin-left: 2px; padding-left: 4px; } .f5 .in { width: 144px; margin-right: 0; }
.f6 { width: 177px; margin-left: 2px; padding-left: 4px; } .f6 .in { width: 93px; margin-right: 1px; }
.f7 { width: 194px; margin-left: 2px; padding-left: 4px; } .f7 .in { width: 96px; margin-right: 4px; } .f7 span { letter-spacing: -1px; }
.c1 { width: 205px; } .c1 .in { width: 92px; margin-right: 1px; }
.c2 { width: 229px; margin-left: 3px; padding-left: 3px; } .c2 .in { width: 93px; margin-right: 2px; }
.c2.low { margin-left: 2px; margin-right: 1px; padding-left: 4px; } .c2.low .in { margin-right: 1px; }
.c3 { width: 229px; margin-left: 2px; padding-left: 2px; } .c3 .in { width: 135px; margin-right: 0; }
.c4 { width: 245px; margin-left: 3px; padding-left: 3px; } .c4 .in { width: 132px; margin-right: 5px; }
.low { margin-top: 1px; }
.r4 { --lt: 7px; } .r5 { --lt: 8px; }
.r4 .low, .r5 .low { --ct: 2px; --lt: 7px; } .r4 .low { --lt: 6px; }
.r6 .out { margin-top: 1px; --lt: 8px; }
.note { margin: 6px 0 0 8px; width: 459px; font: 600 12.500px/20px "Noto Sans CJK JP"; color: #2850a0; white-space: nowrap; letter-spacing: -1.050px; }
.f21 { width: 245px; padding-left: 3px; --lt: 5px; } .f21 .chk { margin: 9px 120px 0 auto; }
.r7 { --lt: 9px; --ct: 5px; }
.f23 { width: 330px; margin-left: 3px; padding-left: 4px; } .f23 .in { width: 193px; margin-right: 3px; }
.f24 { width: 318px; height: 38px; margin-left: 3px; padding-left: 1px; } .f24 .in { width: 193px; margin-right: 7px; } .f24 span { letter-spacing: -1.200px; }
.r8 { --lt: 9px; --ct: 7px; } .r8 .low { --lt: 8px; --ct: 6px; }
.f26 { width: 330px; margin-left: 2px; padding-left: 5px; } .f26 .in { width: 193px; margin-right: 2px; }
.f27 { width: 318px; margin-left: 2px; padding-left: 3px; } .f27 .in { width: 193px; margin-right: 5px; }
.f26 span { letter-spacing: -.4px; } .f27 span { letter-spacing: 0; }
.r9, .r10 { --lt: 5px; --ct: 6px; } .r10 .box { height: 38px; }
.wide, .f30 { display: grid; justify-items: start; align-items: start; grid-template-columns: 103px 270px 25px 78px 278px 129px; }
.wide { width: 895px; }
.wide label, .f30 label { margin-right: 0; }
.date { display: flex; width: 270px; margin-top: var(--ct); font-size: 13.500px; }
.date .era { width: 64px; margin: 0; font-size: 13px; border-radius: 5px 0 0 5px; padding-right: 3px; }
.date i { width: 26px; height: 26px; border: 1px solid #c8c8c8; border-width: 1px 1px 2px 1px; line-height: 29px; text-align: center; background: #fff; color: #222; flex: none; }
.date i.y { width: 50px; letter-spacing: -.3px; }
.date i.g { background: #f6f2f7; color: #808080; line-height: 24px; }
.date i.one { padding-left: 7px; }
.date i.end { border-radius: 0 5px 5px 0; }
.til { padding-left: 1px; margin-top: 7px; line-height: 20px; color: #555; }
.btn { height: 26px; flex: none; border: 1px solid #6a7898; border-radius: 3px; margin-top: var(--ct); text-align: center; background: linear-gradient(#fff 64%, #e4e4e6 65%); line-height: 27px; box-shadow: inset -1px -1px 0 #a8b0c0; color: #222; white-space: nowrap; }
.auto { width: 129px; color: #b4b4b4; letter-spacing: -.3px; }
.r11 { --lt: 8px; --ct: 8px; }
.f30 { width: 523px; grid-template-columns: 103px 278px 129px; }
.f31 { width: 182px; margin-left: 2px; padding-left: 5px; --lt: 4px; --ct: 4px; } .f31 .in { width: 93px; margin-right: 4px; }
.f32 { width: 186px; margin-left: 2px; padding-left: 0; --lt: 4px; --ct: 4px; } .f32 .in { width: 93px; margin-right: 2px; }
.r12 { --lt: 6px; --ct: 6px; padding-top: 2px; }
.f33 { width: 167px; } .f33 .in { width: 92px; margin-right: 2px; }
.f34 { width: 118px; margin-left: 3px; padding-left: 3px; } .f34 .chk { margin: 10px 6px 0 auto; }
.f35 { width: 118px; margin-left: 3px; padding-left: 2px; } .f35 .chk { margin: 10px 7px 0 auto; }
.f36 { width: 299px; height: 36px; margin-left: 2px; padding-left: 2px; }
.f36 > label:first-child { margin-right: 12px; } .box.f36 > .in { margin-left: 0; } .f36 .sel { width: 93px; }
.f36 > .who { margin: var(--lt) 8px 0 9px; width: 56px; }
.code { width: 71px; padding-left: 8px; color: #666; }
.f37 { width: 143px; height: 38px; margin: -2px 0 0 10px; padding-left: 3px; --lt: 8px; --ct: 8px; } .f37 .in { margin-right: 4px; }
.f38 { width: 74px; margin-left: 3px; padding-left: 2px; } .go { width: 69px; padding-right: 4px; }

/* numbered callouts pinned over the form */
.n { position: absolute; width: 28px; height: 28px; margin: -14px 0 0 -14px; border: 1.500px solid #f00000; border-radius: 50%; background: #fff; color: #f00000; text-align: center; font-size: 15.500px; line-height: 27px; letter-spacing: -.5px; }
.big { width: 34px; height: 34px; margin: -17px 0 0 -17px; font-size: 19px; line-height: 32px; letter-spacing: 0; }
.n1 { left: 98px; top: 22px; } .n2 { left: 309px; top: 26px; } .n3 { left: 494px; top: 23px; }
.n4 { left: 97px; top: 70px; } .n5 { left: 313px; top: 67px; } .n6 { left: 552px; top: 65px; } .n7 { left: 751px; top: 67px; }
.n8 { left: 125px; top: 113px; } .n9 { left: 360px; top: 111px; } .n10 { left: 552px; top: 109px; } .n11 { left: 772px; top: 106px; }
.n12 { left: 101px; top: 153px; } .n13 { left: 315px; top: 154px; } .n14 { left: 519px; top: 151px; } .n15 { left: 767px; top: 156px; }
.n16 { left: 122px; top: 197px; } .n17 { left: 316px; top: 196px; } .n18 { left: 521px; top: 197px; } .n19 { left: 748px; top: 194px; }
.n20 { left: 94px; top: 239px; } .n21 { left: 834px; top: 240px; }
.n22 { left: 96px; top: 280px; } .n23 { left: 312px; top: 279px; } .n24 { left: 648px; top: 282px; }
.n25 { left: 94px; top: 322px; } .n26 { left: 327px; top: 320px; } .n27 { left: 652px; top: 321px; }
.n28 { left: 114px; top: 369px; } .n29 { left: 173px; top: 413px; } .n30 { left: 112px; top: 459px; }
.n31 { left: 665px; top: 463px; } .n32 { left: 791px; top: 460px; }
.n33 { left: 32px; top: 506px; } .n34 { left: 228px; top: 500px; } .n35 { left: 382px; top: 503px; } .n36 { left: 507px; top: 505px; } .n37 { left: 802px; top: 502px; } .n38 { left: 946px; top: 505px; }

/* floating tool palette */
.palette { position: absolute; left: 15px; top: 15px; width: 50px; height: 317px; background: #fff; border: 1px solid #b4b4b4; border-radius: 6px; display: flex; flex-direction: column; gap: 10px; padding: 5px 0 0 4px; }
.grip { width: 40px; height: 5px; margin: 0 0 1px 1px; border-radius: 2px; background: #b0b0b0; flex: none; }
.tool { width: 40px; height: 40px; border-radius: 3px; display: flex; align-items: center; justify-content: center; position: relative; flex: none; padding: 0 1px 2px 0; }
.tool.on { background: #0265dc; }
.cr { position: absolute; right: 5px; bottom: 5px; width: 6px; height: 6px; color: #222; }
.on .cr { color: #fff; }
.abox { width: 23px; height: 23px; border: 2px dashed #222; font: 700 15px/19px "Liberation Sans"; text-align: center; }

/* scroll bar, right rail */
.track { width: 20px; background: #efefef; padding: 207px 0 0 7px; }
.track i { display: block; width: 6px; height: 23px; background: #858585; }
.side { width: 60px; border-left: 1px solid #d0d0d0; display: flex; flex-direction: column; align-items: center; color: #111; padding-left: 1px; }
.q1 { margin-top: 20px; } .hsep { width: 29px; height: 1px; background: #ddd; margin-top: 15px; } .q2 { margin-top: 16px; } .q3 { margin-top: 26px; } .q4 { margin-top: 27px; }
.pageno { margin-top: 358px; width: 40px; height: 40px; border: 1px solid #aaa; border-radius: 4px; text-align: center; line-height: 36px; font-size: 15px; }
.total { margin-top: 12px; line-height: 22px; font-size: 15px; letter-spacing: .3px; }
.q5 { margin-top: 34px; } .q6 { margin-top: 35px; } .hsep.lg { width: 41px; margin-top: 19px; }
.q7 { margin-top: 15px; } .q8 { margin: 23px 0 0 4px; } .q9 { margin-top: 24px; } .q10 { margin-top: 26px; }

/* agent window */
.tk { position: absolute; left: 8px; top: 780px; width: 402px; height: 189px; border: 1px solid #a8a8a8; border-radius: 9px; background: #f0f0f0; overflow: hidden; box-shadow: 0 16px 30px rgba(0,0,0,.36), 0 0 14px rgba(0,0,0,.14); display: flex; flex-direction: column; align-items: center; color: #000; }
.tk header { height: 37px; width: 100%; background: #f3f2f9; display: flex; align-items: center; padding: 0 0 1px 13px; font-size: 14.500px; letter-spacing: -.2px; flex: none; }
.tk header span { margin-left: 9px; width: 213px; }
.m2 { margin-left: 46px; } .m3 { margin-left: 47px; }
.tk p { margin: 7px 0 0; font: 21px/36px "Noto Sans CJK JP"; font-feature-settings: normal; letter-spacing: 2.700px; padding-left: 2px; }
.entry { margin-top: 19px; width: 394px; height: 30px; background: #fff; border: solid #a0a0a0; border-width: 1px 0 0 1px; display: flex; align-items: center; padding: 0 0 2px; font: 24px "Liberation Sans", "Noto Sans CJK JP"; font-feature-settings: normal; flex: none; }
.entry span { width: 379px; overflow: hidden; line-height: 28px; }
.entry i { width: 2px; height: 26px; background: #000; margin-top: 2px; }
.send { margin-top: 19px; width: 68px; height: 28px; border: solid; border-width: 2px 1px 1px 2px; border-color: #6c6c6c #fff #fff #6c6c6c; font: 22px/25px "Noto Sans CJK JP"; text-align: center; letter-spacing: 2px; padding-left: 3px; }

/* task bar */
.taskbar { height: 60px; flex: none; border-top: 1px solid #b3b3c2; background: linear-gradient(90deg, #dddbe9, #dcdbe9 30%, #d5dceb 48%, #d8dbe8 75%, #dddbe9); display: flex; align-items: center; position: relative; }
.weather { margin-left: 26px; width: 303px; height: 36px; display: flex; margin-top: -6px; }
.weather span { width: 20px; height: 20px; margin: 0 0 0 -20px; border-radius: 50%; background: #c42b1c; color: #fff; font-size: 14px; line-height: 19px; text-align: center; z-index: 1; }
.search { margin-left: 17px; width: 274px; height: 40px; margin-top: -1px; border: 1px solid #cfcddc; border-radius: 20px; background: #f3f2f9; display: flex; align-items: center; padding-left: 14px; gap: 12px; color: #555; font-size: 17px; }
.apps { margin-left: 7px; display: flex; gap: 7.100px; margin-top: -2px; }
.apps > div { width: 48px; height: 50px; display: flex; align-items: center; justify-content: center; position: relative; border-radius: 5px; }
.apps svg { width: 30px; height: 30px; }
.run::after { content: ""; position: absolute; bottom: 1px; left: 20px; width: 8px; height: 4px; border-radius: 2px; background: #84848f; }
.act { background: #ebeef6; }
.act::after { background: #0f74cc; width: 20px; left: 14px; }
.apps .who { position: absolute; left: 25px; top: 4px; width: 20px; height: 20px; border-radius: 50%; background: #7b1fa2; color: #fff; font-size: 11px; line-height: 20px; text-align: center; }
.tray { margin-left: auto; display: flex; align-items: center; padding: 0 24px 2px 0; }
.y2 { margin-left: 23px; } .y3 { margin-left: 19px; } .ime { font-size: 19px; margin-left: 18px; width: 20px; } .y4 { margin-left: 21px; } .y5 { margin-left: 9px; } .y6 { margin-left: 12px; }
.clock { width: 90px; margin: -2px 0 0 6px; display: flex; flex-direction: column; align-items: flex-end; font-size: 14.500px; line-height: 20px; letter-spacing: -.1px; color: #222; }
```
